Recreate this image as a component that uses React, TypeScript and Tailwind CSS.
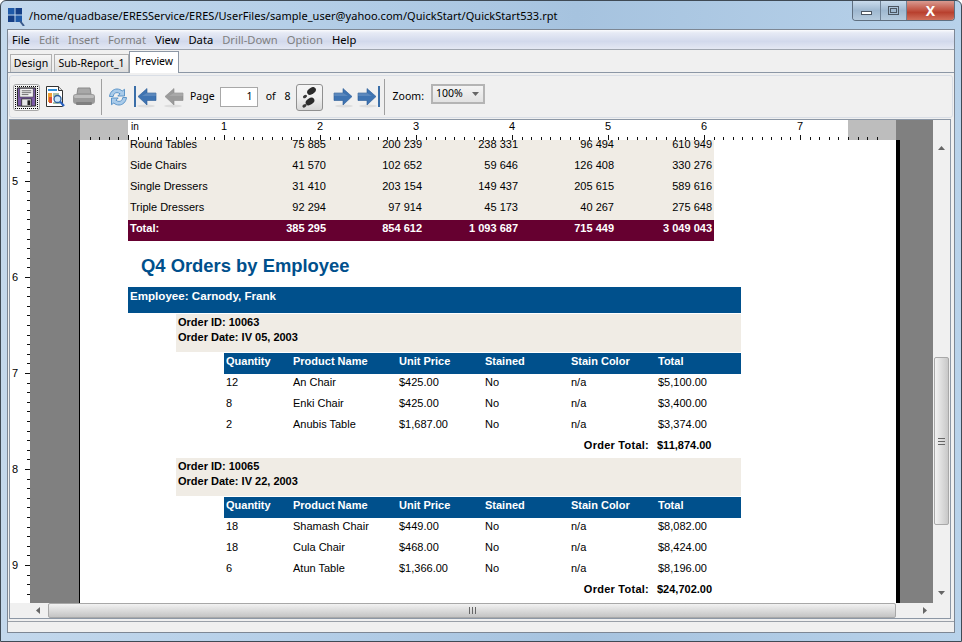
const ui = "font-['Noto_Sans',sans-serif]"
const report = "font-['Liberation_Sans',Arial,sans-serif]"

const menus = [
  { label: 'File', on: true },
  { label: 'Edit', on: false },
  { label: 'Insert', on: false },
  { label: 'Format', on: false },
  { label: 'View', on: true },
  { label: 'Data', on: true },
  { label: 'Drill-Down', on: false },
  { label: 'Option', on: false },
  { label: 'Help', on: true },
]

const summary = [
  ['Round Tables', '75 885', '200 239', '238 331', '96 494', '610 949'],
  ['Side Chairs', '41 570', '102 652', '59 646', '126 408', '330 276'],
  ['Single Dressers', '31 410', '203 154', '149 437', '205 615', '589 616'],
  ['Triple Dressers', '92 294', '97 914', '45 173', '40 267', '275 648'],
]
const totals = ['Total:', '385 295', '854 612', '1 093 687', '715 449', '3 049 043']

const orders = [
  {
    id: '10063',
    date: 'IV 05, 2003',
    total: '$11,874.00',
    items: [
      ['12', 'An Chair', '$425.00', 'No', 'n/a', '$5,100.00'],
      ['8', 'Enki Chair', '$425.00', 'No', 'n/a', '$3,400.00'],
      ['2', 'Anubis Table', '$1,687.00', 'No', 'n/a', '$3,374.00'],
    ],
  },
  {
    id: '10065',
    date: 'IV 22, 2003',
    total: '$24,702.00',
    items: [
      ['18', 'Shamash Chair', '$449.00', 'No', 'n/a', '$8,082.00'],
      ['18', 'Cula Chair', '$468.00', 'No', 'n/a', '$8,424.00'],
      ['6', 'Atun Table', '$1,366.00', 'No', 'n/a', '$8,196.00'],
    ],
  },
]
const itemHead = ['Quantity', 'Product Name', 'Unit Price', 'Stained', 'Stain Color', 'Total']

function TopRuler() {
  const ticks = Array.from({ length: 84 }, (_, i) => i - 5)
  return (
    <svg width="816" height="20" className="block shrink-0">
      <rect x="0" y="0" width="48" height="20" fill="#bdbdbd" />
      <rect x="48" y="0" width="720" height="20" fill="#fff" />
      <rect x="768" y="0" width="48" height="20" fill="#bdbdbd" />
      {ticks.map((k) => {
        const x = Math.round(48 + k * 9.6)
        if (x < 5) return null
        const major = k % 10 === 0
        return <rect key={k} x={x} y={major ? 15 : 17} width="1" height={major ? 5 : 3} fill="#111" />
      })}
      <text x="51" y="10" fontSize="10" fill="#000" fontFamily="Liberation Sans">in</text>
      {[1, 2, 3, 4, 5, 6, 7].map((n) => (
        <text key={n} x={48 + n * 96} y="10" fontSize="11" textAnchor="middle" fill="#000" fontFamily="Liberation Sans">{n}</text>
      ))}
    </svg>
  )
}

function LeftRuler() {
  const ticks = Array.from({ length: 50 }, (_, i) => i)
  return (
    <svg width="20" height="463" className="block shrink-0">
      <rect width="20" height="463" fill="#fff" />
      {ticks.map((k) => {
        const y = Math.round(2.6 + k * 9.6)
        const major = (k - 4) % 10 === 0
        return <rect key={k} x={major ? 15 : 17} y={y} width={major ? 5 : 3} height="1" fill="#111" />
      })}
      {[5, 6, 7, 8, 9].map((n, i) => (
        <text key={n} x="2" y={45 + i * 96} fontSize="11" fill="#000" fontFamily="Liberation Sans">{n}</text>
      ))}
    </svg>
  )
}

function FloppyIcon() {
  return (
    <svg width="22" height="22" viewBox="0 0 22 22">
      <path d="M1.500 1.500h19v19h-19z" fill="#7b5aa6" stroke="#222" />
      <rect x="4" y="2" width="14" height="9" fill="#f4f4f4" stroke="#333" strokeWidth="0.6" />
      <path d="M6 4.500h10M6 6.500h10M6 8.500h7" stroke="#555" strokeWidth="0.9" />
      <rect x="6" y="13" width="10" height="7.500" fill="#e8e8e8" stroke="#222" strokeWidth="0.8" />
      <rect x="12" y="14.500" width="3" height="5" fill="#222" />
    </svg>
  )
}

function ReportIcon() {
  return (
    <svg width="22" height="24" viewBox="0 0 22 24">
      <path d="M2.500 1.500h12l4 4v16h-16z" fill="#fff" stroke="#333" />
      <path d="M14.500 1.500v4h4" fill="#ddd" stroke="#333" />
      <rect x="4" y="4" width="9" height="2" fill="#2f8fd8" />
      <rect x="4" y="8" width="4" height="9" fill="#f0a030" />
      <rect x="5" y="12" width="3" height="6" fill="#d94f3a" />
      <path d="M9 9h6M9 11h6M9 18h7" stroke="#5a8a50" />
      <circle cx="13.500" cy="14" r="3.500" fill="#cfe8f8" stroke="#2c5f9e" strokeWidth="1.300" />
      <path d="M16 16.500l4 4.500" stroke="#2a62c0" strokeWidth="2.200" />
    </svg>
  )
}

function PrinterIcon() {
  return (
    <svg width="24" height="20" viewBox="0 0 24 20">
      <path d="M6 1h12l1 6H5z" fill="#a8a8a8" stroke="#8a8a8a" />
      <rect x="1" y="7" width="22" height="10" rx="3" fill="#9a9a9a" />
      <rect x="2" y="8" width="20" height="3" rx="1.500" fill="#bcbcbc" />
      <rect x="4" y="15" width="16" height="3" rx="1" fill="#7f7f7f" />
    </svg>
  )
}

function RefreshIcon() {
  return (
    <svg width="20" height="20" viewBox="0 0 20 20">
      <path d="M1.500 9.500c.5-4.500 3.800-7.500 7.500-7.500 2 0 3.800.7 5.200 2l2.300-1.700v6.700h-6.700l2.200-2.200c-1-.8-2-1.200-3-1.200-2 0-3.500 1.400-3.800 3.900z" fill="#a9cbea" stroke="#4f8cc4" strokeWidth="0.9" />
      <path d="M18.500 10.500c-.5 4.500-3.800 7.500-7.500 7.500-2 0-3.800-.7-5.200-2l-2.300 1.700v-6.700h6.700l-2.200 2.200c1 .8 2 1.200 3 1.200 2 0 3.500-1.400 3.800-3.900z" fill="#a9cbea" stroke="#4f8cc4" strokeWidth="0.9" />
    </svg>
  )
}

function ArrowIcon({ dir, bar, gray }: { dir: 'left' | 'right'; bar?: boolean; gray?: boolean }) {
  const fill = gray ? '#9b9b9b' : '#3f74b2'
  const edge = gray ? '#8c8c8c' : '#2a5b96'
  return (
    <svg width="24" height="24" viewBox="0 0 24 24" className={dir === 'left' ? '' : '-scale-x-100'}>
      <ellipse cx="13" cy="21" rx="9" ry="1.500" fill="#000" opacity="0.08" />
      {bar && <rect x="1" y="1" width="2" height="21" fill="#3a6ea8" />}
      <path d="M5 11.500L14 3.500v4.500h9v7.500h-9v4.500z" fill={fill} stroke={edge} strokeWidth="0.6" />
      <path d="M14 8h9v3H9z" fill="#fff" opacity="0.15" />
    </svg>
  )
}

function StepsIcon() {
  return (
    <svg width="16" height="21" viewBox="0 0 16 21">
      <ellipse cx="10.500" cy="4" rx="4.800" ry="3.200" fill="#2b2b2b" transform="rotate(-35 10.500 4)" />
      <ellipse cx="4" cy="9.500" rx="2.200" ry="1.500" fill="#3a3a3a" transform="rotate(-35 4 9.500)" />
      <ellipse cx="9" cy="14.500" rx="4.800" ry="3.200" fill="#2b2b2b" transform="rotate(-35 9 14.500)" />
      <ellipse cx="3.500" cy="18.800" rx="2.200" ry="1.500" fill="#3a3a3a" transform="rotate(-35 3.500 18.800)" />
    </svg>
  )
}

function Tri({ dir, className }: { dir: 'up' | 'down' | 'left' | 'right'; className?: string }) {
  const d = { up: 'M0 4L3.500 0L7 4z', down: 'M0 0L7 0L3.500 4z', left: 'M4 0V7L0 3.500z', right: 'M0 0V7L4 3.500z' }[dir]
  const v = dir === 'up' || dir === 'down'
  return (
    <svg width={v ? 7 : 4} height={v ? 4 : 7} viewBox={v ? '0 0 7 4' : '0 0 4 7'} className={className}>
      <path d={d} fill="#666" />
    </svg>
  )
}

function Grip({ vertical }: { vertical?: boolean }) {
  return (
    <svg width={vertical ? 7 : 9} height="7" viewBox={vertical ? '0 0 7 7' : '0 0 9 7'}>
      {vertical ? (
        <path d="M0 .5h7M0 3.500h7M0 6.500h7" stroke="#666" />
      ) : (
        <path d="M1.500 0v7M4.500 0v7M7.500 0v7" stroke="#666" />
      )}
    </svg>
  )
}

function WindowLogo() {
  return (
    <svg width="18" height="20" viewBox="0 0 18 20">
      <rect x="1" y="2" width="6.500" height="6.500" fill="#1f5aa8" />
      <rect x="8.500" y="2" width="6.500" height="6.500" fill="#153f86" />
      <rect x="1" y="9.500" width="6.500" height="6.500" fill="#153f86" />
      <rect x="8.500" y="9.500" width="6.500" height="6.500" fill="#1f5aa8" />
      <path d="M13 15l4 5" stroke="#3a5a8c" strokeWidth="2" />
    </svg>
  )
}

function Order({ order }: { order: (typeof orders)[number] }) {
  return (
    <div>
      <div className="ml-[48px] mb-px flex h-[38px] w-[565px] flex-col bg-[#f0ece5] pl-[2px] pt-px text-[11px] font-bold leading-[15px] text-black">
        <div>Order ID: {order.id}</div>
        <div>Order Date: {order.date}</div>
      </div>
      <div className="ml-[96px] w-[517px]">
        <div className="grid h-[21px] grid-cols-[67px_106px_86px_86px_87px_85px] bg-[#00508c] text-[11px] font-bold leading-[17px] text-white">
          {itemHead.map((h) => (
            <div key={h} className="pl-[2px]">{h}</div>
          ))}
        </div>
        {order.items.map((row) => (
          <div key={row[1]} className="grid h-[21px] grid-cols-[67px_106px_86px_86px_87px_85px] text-[11px] leading-[17px] text-black">
            {row.map((c, i) => (
              <div key={i} className="pl-[2px]">{c}</div>
            ))}
          </div>
        ))}
        <div className="grid h-[21px] grid-cols-[432px_85px] text-[11px] font-bold leading-[17px] text-black">
          <div className="pr-[7px] text-right tracking-[0.25px]">Order Total:</div>
          <div className="pl-px">{order.total}</div>
        </div>
      </div>
    </div>
  )
}

export default function App() {
  return (
    <div className={`flex h-[642px] w-[962px] flex-col overflow-hidden rounded-t-[6px] border border-[#3f4a55] bg-[linear-gradient(90deg,#c3d8ec_0%,#b5cfe8_30%,#a6c3df_60%,#b8d2ea_100%)] ${ui}`}>
      {/* Title bar */}
      <div className="flex h-[28px] shrink-0 items-start pl-[6px] pr-[6px]">
        <div className="mt-[5px]"><WindowLogo /></div>
        <div className="ml-[4px] mt-[6px] text-[11px] leading-[17px] tracking-[0.04px] text-black">
          /home/quadbase/ERESService/ERES/UserFiles/sample_user@yahoo.com/QuickStart/QuickStart533.rpt
        </div>
        <div className="ml-auto flex h-[20px] overflow-hidden rounded-b-[4px] border border-t-0 border-[#5f6f80]">
          <div className="flex w-[28px] items-center justify-center border-r border-[#6f8296] bg-[linear-gradient(180deg,#c9dbec,#9fb8d0_50%,#b6cbde)]">
            <div className="mt-[5px] h-[4px] w-[11px] border border-[#4c5662] bg-white" />
          </div>
          <div className="flex w-[26px] items-center justify-center border-r border-[#6f8296] bg-[linear-gradient(180deg,#c9dbec,#9fb8d0_50%,#b6cbde)]">
            <div className="h-[9px] w-[11px] border border-[#4c5662] p-px"><div className="h-full w-full border border-[#4c5662]" /></div>
          </div>
          <div className="flex w-[47px] items-center justify-center bg-[linear-gradient(180deg,#d99a90,#c0503f_50%,#b8402e_60%,#d0705c)] text-[14px] font-bold leading-none text-white">
            X
          </div>
        </div>
      </div>

      {/* Client area */}
      <div className="mx-[6px] flex w-[948px] flex-1 flex-col border border-[#7d8794] bg-[#f0f0f0]">
        {/* Menu bar */}
        <div className="flex h-[20px] shrink-0 items-center gap-[9px] border-b border-[#a0a6b0] bg-[linear-gradient(180deg,#fafbfd_0%,#e6eaf5_15%,#d2d9ec_60%,#e4e8f3_100%)] pl-[4px] pt-[2px] text-[11.2px]">
          {menus.map((m) => (
            <span key={m.label} className={m.on ? 'text-black' : 'text-[#808080]'}>{m.label}</span>
          ))}
        </div>

        {/* Tabs */}
        <div className="relative z-10 flex h-[22px] shrink-0 items-end gap-[2px] pl-[2px] text-[10.5px]">
          <div className="flex h-[18px] w-[42px] items-center justify-center border border-b-0 border-[#b0b0b0] bg-[linear-gradient(180deg,#f6f6f6,#dcdcdc)] pt-px">Design</div>
          <div className="flex h-[18px] w-[75px] items-center justify-center border border-b-0 border-[#b0b0b0] bg-[linear-gradient(180deg,#f6f6f6,#dcdcdc)] pt-px">Sub-Report_1</div>
          <div className="-mb-px -ml-[2px] flex h-[22px] w-[50px] items-center justify-center border border-b-0 border-[#8c97a5] bg-white pb-px">Preview</div>
        </div>

        {/* Toolbar */}
        <div className="flex h-[47px] shrink-0 items-center border-t border-[#8c97a5] pl-px pr-px">
          <div className="flex h-[43px] w-full items-center rounded-[3px] border border-[#d9dee6] pl-[3px] pt-[2px] text-[10.5px]">
            <div className="flex h-[27px] w-[27px] items-center justify-center rounded-[3px] border border-[#a8a8a8] bg-[#f4f4f4]">
              <div className="flex h-[23px] w-[23px] items-center justify-center border border-dotted border-black"><FloppyIcon /></div>
            </div>
            <div className="ml-[4px]"><ReportIcon /></div>
            <div className="ml-[6px]"><PrinterIcon /></div>
            <div className="ml-[5px] h-[36px] w-px bg-[#a0a0a0]" />
            <div className="ml-[6px]"><RefreshIcon /></div>
            <div className="ml-[5px]"><ArrowIcon dir="left" bar /></div>
            <div className="ml-[3px]"><ArrowIcon dir="left" gray /></div>
            <span className="ml-[6px] text-black">Page</span>
            <div className="ml-[5px] flex h-[20px] w-[38px] items-center justify-end border border-[#a8a8a8] bg-white pr-[4px] text-black">1</div>
            <span className="ml-[8px]">of</span>
            <span className="ml-[9px]">8</span>
            <div className="ml-[5px] flex h-[27px] w-[27px] items-center justify-center rounded-[3px] border border-[#909090] bg-[linear-gradient(180deg,#f5f5f5,#f0f0f0_50%,#d8d8d8)]"><StepsIcon /></div>
            <div className="ml-[10px]"><ArrowIcon dir="right" /></div>
            <div className="ml-0"><ArrowIcon dir="right" bar /></div>
            <div className="ml-[3px] h-[36px] w-px bg-[#a0a0a0]" />
            <span className="ml-[8px]">Zoom:</span>
            <div className="ml-[7px] -mt-[7px] flex h-[20px] w-[54px] items-center justify-between border-2 border-[#b4b4b4] bg-[linear-gradient(180deg,#f4f4f4,#e2e2e2)] pl-[3px] pr-[4px]">
              <span>100%</span>
              <Tri dir="down" />
            </div>
          </div>
        </div>

        {/* Report viewer */}
        <div className="ml-px flex w-[942px] flex-col border-x border-b border-t border-[#8c97a5]">
          <div className="flex h-[20px]">
            <div className="h-[20px] w-[70px] bg-[#808080]" />
            <TopRuler />
            <div className="h-[20px] w-[37px] bg-[#808080]" />
            <div className="flex-1 bg-[#f0f0f0]" />
          </div>
          <div className="flex h-[463px]">
            <LeftRuler />
            <div className="h-full w-[49px] bg-[#808080]" />
            <div className={`h-full w-[821px] overflow-hidden border-l border-r-4 border-black bg-white ${report}`}>
              <div className="-mt-[4px] ml-[48px]">
                <div className="w-[586px] bg-[#f0ece5] text-[11px] leading-[17px] text-black">
                  {summary.map((row) => (
                    <div key={row[0]} className="grid h-[21px] grid-cols-[100px_100px_96px_96px_96px_98px]">
                      {row.map((c, i) => (
                        <div key={i} className={i === 0 ? 'pl-[2px]' : 'pr-[2px] text-right'}>{c}</div>
                      ))}
                    </div>
                  ))}
                  <div className="grid h-[21px] grid-cols-[100px_100px_96px_96px_96px_98px] bg-[#660030] font-bold text-white">
                    {totals.map((c, i) => (
                      <div key={i} className={i === 0 ? 'pl-[2px]' : 'pr-[2px] text-right'}>{c}</div>
                    ))}
                  </div>
                </div>
                <h2 className="mt-[14px] h-[21px] pl-[13px] text-[18.4px] font-bold leading-[21px] text-[#00508c]">Q4 Orders by Employee</h2>
                <div className="mt-[11px] mb-px h-[26px] w-[613px] bg-[#00508c] pl-[2px] text-[11.6px] font-bold leading-[18px] text-white">Employee: Carnody, Frank</div>
                {orders.map((o) => (
                  <Order key={o.id} order={o} />
                ))}
              </div>
            </div>
            <div className="h-full w-[33px] bg-[#808080]" />
            <div className="flex h-full flex-1 flex-col items-center bg-[#f0f0f0] pt-[6px]">
              <Tri dir="up" />
              <div className="mt-[207px] flex h-[168px] w-[15px] items-center justify-center rounded-[2px] border border-[#a8a8a8] bg-[linear-gradient(90deg,#f2f2f2,#c8c8c8)]"><Grip vertical /></div>
              <Tri dir="down" className="mt-[66px]" />
            </div>
          </div>
          <div className="flex h-[15px]">
            <div className="flex w-[38px] items-center justify-end bg-[#f0f0f0] pr-[8px]"><Tri dir="left" /></div>
            <div className="flex h-[15px] w-[848px] items-center justify-center rounded-[2px] border border-[#a8a8a8] bg-[linear-gradient(180deg,#f2f2f2,#c4c4c4)]"><Grip /></div>
            <div className="flex flex-1 items-center pl-[27px]"><Tri dir="right" /></div>
          </div>
        </div>

        {/* Status bar */}
        <div className="mt-[2px] flex-1 border-t border-[#9aa0a8] bg-[#f0f0f0]" />
      </div>
      <div className="h-[8px] shrink-0" />
    </div>
  )
}
